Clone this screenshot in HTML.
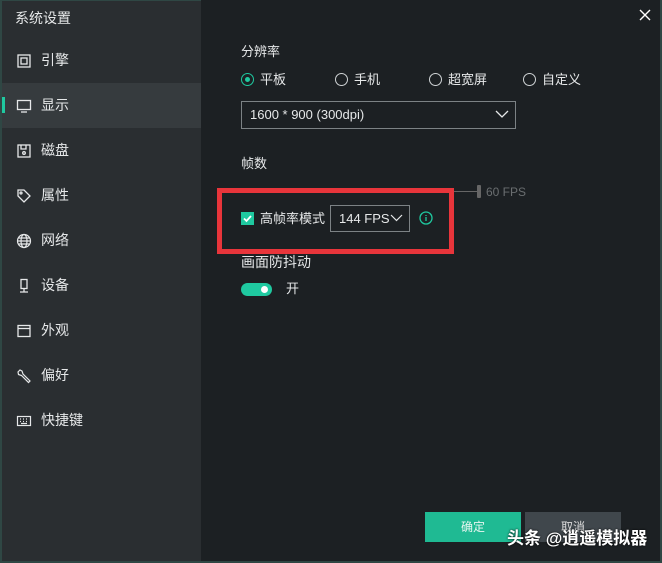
<!DOCTYPE html><html><head><meta charset="utf-8"><style>
*{margin:0;padding:0;box-sizing:border-box}
body{width:662px;height:563px;background:#1c2023;font-family:"Liberation Sans","Noto Sans CJK SC",sans-serif;color:#e6e8e9;position:relative;overflow:hidden;font-size:13px;line-height:16px}
.abs{position:absolute}
#side{left:0;top:0;width:201px;height:563px;background:#2a2e31;border-left:2px solid #2f4744;border-top:1px solid #2f4744}
#bottom{left:0;top:561px;width:662px;height:2px;background:#2f4744}
#right{left:660px;top:0;width:2px;height:563px;background:#2f4744}
.item{position:absolute;left:0;width:199px;height:45px;display:flex;align-items:center}
.item svg{position:absolute;left:14px}
.item span{position:absolute;left:39px;font-size:14px;top:14px}
.act{background:#363b3e}
.act:before{content:"";position:absolute;left:0;top:14px;width:3px;height:16px;background:#1fc9a0}
.radio{display:inline-block;width:13px;height:13px;border:1px solid #cfd3d5;border-radius:50%;position:absolute;top:73px}
.lbl{position:absolute;font-size:13px}
</style></head><body>
<div id="side" class="abs">
<div class="abs" style="left:13px;top:9px;font-size:14px">系统设置</div>
<div class="item" style="top:37px"><svg width="16" height="16" viewBox="0 0 16 16" fill="none" stroke="#e6e8e9" stroke-width="1.3"><rect x="2" y="2" width="12" height="12"/><rect x="5" y="5" width="6" height="6"/></svg><span>引擎</span></div>
<div class="item act" style="top:82px"><svg width="16" height="16" viewBox="0 0 16 16" fill="none" stroke="#e6e8e9" stroke-width="1.3"><rect x="1.5" y="2.5" width="13" height="9"/><path d="M5 14h6"/></svg><span>显示</span></div>
<div class="item" style="top:127px"><svg width="16" height="16" viewBox="0 0 16 16" fill="none" stroke="#e6e8e9" stroke-width="1.3"><rect x="2" y="2" width="12" height="12"/><path d="M5 2v4h5V2"/><circle cx="8" cy="10" r="1.3"/></svg><span>磁盘</span></div>
<div class="item" style="top:172px"><svg width="16" height="16" viewBox="0 0 16 16" fill="none" stroke="#e6e8e9" stroke-width="1.3"><path d="M2 2h6l6 6-6 6-6-6z"/><circle cx="5" cy="5" r="1"/></svg><span>属性</span></div>
<div class="item" style="top:217px"><svg width="16" height="16" viewBox="0 0 16 16" fill="none" stroke="#e6e8e9" stroke-width="1.2"><circle cx="8" cy="8" r="6.5"/><ellipse cx="8" cy="8" rx="3" ry="6.5"/><path d="M1.5 8h13M2.5 5h11M2.5 11h11"/></svg><span>网络</span></div>
<div class="item" style="top:262px"><svg width="16" height="16" viewBox="0 0 16 16" fill="none" stroke="#e6e8e9" stroke-width="1.3"><rect x="5" y="1.5" width="6" height="9"/><path d="M8 10.5v3M4 14h8"/></svg><span>设备</span></div>
<div class="item" style="top:307px"><svg width="16" height="16" viewBox="0 0 16 16" fill="none" stroke="#e6e8e9" stroke-width="1.3"><rect x="2" y="2.5" width="12" height="11"/><path d="M2 5.5h12"/></svg><span>外观</span></div>
<div class="item" style="top:352px"><svg width="16" height="16" viewBox="0 0 16 16" fill="none" stroke="#e6e8e9" stroke-width="1.2"><path d="M2 4l2-2 2 1 1 3 7 7-1.5 1.5-7-7-3-1z"/></svg><span>偏好</span></div>
<div class="item" style="top:397px"><svg width="16" height="16" viewBox="0 0 16 16" fill="none" stroke="#e6e8e9" stroke-width="1.2"><rect x="1.5" y="3.5" width="13" height="9"/><path d="M4 6h1M7 6h1M10 6h1M4 8.5h1M7 8.5h1M10 8.5h1M5 10.5h6"/></svg><span>快捷键</span></div>
</div>
<div id="right" class="abs"></div><div id="bottom" class="abs"></div>
<svg class="abs" style="left:639px;top:9px" width="12" height="12" viewBox="0 0 12 12" stroke="#fff" stroke-width="1.4"><path d="M1 1l10 10M11 1L1 11"/></svg>
<div class="lbl" style="left:241px;top:44px">分辨率</div>
<span class="radio" style="left:241px;border-color:#1fc9a0"><i style="position:absolute;left:3px;top:3px;width:5px;height:5px;border-radius:50%;background:#1fc9a0"></i></span><div class="lbl" style="left:260px;top:72px">平板</div>
<span class="radio" style="left:335px"></span><div class="lbl" style="left:354px;top:72px">手机</div>
<span class="radio" style="left:429px"></span><div class="lbl" style="left:448px;top:72px">超宽屏</div>
<span class="radio" style="left:523px"></span><div class="lbl" style="left:542px;top:72px">自定义</div>
<div class="abs" style="left:241px;top:101px;width:275px;height:28px;border:1px solid #7c8285"></div>
<div class="lbl" style="left:250px;top:107px">1600 * 900 (300dpi)</div>
<svg class="abs" style="left:495px;top:110px" width="14" height="9" viewBox="0 0 14 9" fill="none" stroke="#e6e8e9" stroke-width="1.3"><path d="M1 1l6 6 6-6"/></svg>
<div class="lbl" style="left:241px;top:156px">帧数</div>
<div class="abs" style="left:453px;top:191px;width:25px;height:1px;background:#666"></div>
<div class="abs" style="left:477px;top:185px;width:4px;height:13px;background:#666;border-radius:1px"></div>
<div class="lbl" style="left:486px;top:184px;color:#6a6e70;font-size:12px">60 FPS</div>
<div class="abs" style="left:217px;top:188px;width:237px;height:66px;border:5px solid #e8353b"></div>
<div class="abs" style="left:241px;top:212px;width:13px;height:13px;background:#1fc9a0"></div>
<svg class="abs" style="left:242px;top:213px" width="11" height="11" viewBox="0 0 11 11" fill="none" stroke="#fff" stroke-width="1.8"><path d="M2 5.5l2.5 2.5L9 3"/></svg>
<div class="lbl" style="left:260px;top:211px">高帧率模式</div>
<div class="abs" style="left:330px;top:205px;width:80px;height:27px;border:1px solid #7c8285"></div>
<div class="lbl" style="left:339px;top:211px">144 FPS</div>
<svg class="abs" style="left:390px;top:214px" width="13" height="8" viewBox="0 0 13 8" fill="none" stroke="#e6e8e9" stroke-width="1.2"><path d="M1 1l5.5 5.5L12 1"/></svg>
<svg class="abs" style="left:419px;top:211px" width="14" height="14" viewBox="0 0 14 14" fill="none" stroke="#1fc9a0" stroke-width="1.3"><circle cx="7" cy="7" r="6"/><path d="M7 6v4M7 4v1"/></svg>
<div class="lbl" style="left:241px;top:254px;font-size:14px">画面防抖动</div>
<div class="abs" style="left:241px;top:283px;width:31px;height:13px;border-radius:7px;background:#1fc9a0"><i style="position:absolute;right:4px;top:3px;width:7px;height:7px;border-radius:50%;background:#fff"></i></div>
<div class="lbl" style="left:286px;top:281px">开</div>
<div class="abs" style="left:425px;top:512px;width:96px;height:30px;background:#1fba93;color:#e8f6f1;text-align:center;line-height:30px;font-size:12px">确定</div>
<div class="abs" style="left:525px;top:512px;width:96px;height:30px;background:#40474c;color:#ddd;text-align:center;line-height:30px;font-size:12px">取消</div>
<div class="abs" style="left:507px;top:529px;font-size:17px;line-height:20px;font-weight:bold;color:#fff;text-shadow:0 0 2px #000">头条 @逍遥模拟器</div>
</body></html>
